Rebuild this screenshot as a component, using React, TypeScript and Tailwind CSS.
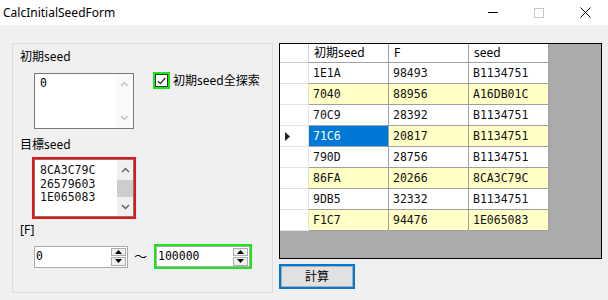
import type React from "react";

const ui = { fontFamily: '"Noto Sans", "Noto Sans CJK JP", sans-serif' };
const mono = { fontFamily: '"DejaVu Sans Mono", "Liberation Mono", monospace' };

const rows = [
  ["1E1A", "98493", "B1134751"],
  ["7040", "88956", "A16DB01C"],
  ["70C9", "28392", "B1134751"],
  ["71C6", "20817", "B1134751"],
  ["790D", "28756", "B1134751"],
  ["86FA", "20266", "8CA3C79C"],
  ["9DB5", "32332", "B1134751"],
  ["F1C7", "94476", "1E065083"],
];

function Chevron({ up, color }: { up?: boolean; color: string }): React.ReactNode {
  return (
    <svg width="9" height="6" viewBox="0 0 9 6">
      <path
        d={up ? "M1 5 L4.5 1.5 L8 5" : "M1 1 L4.5 4.5 L8 1"}
        fill="none"
        stroke={color}
        strokeWidth="1.4"
      />
    </svg>
  );
}

function Spinner(): React.ReactNode {
  return (
    <div className="flex flex-col w-[15px] h-[18px] gap-[1px] mr-[1px]">
      <div className="flex-1 flex items-center justify-center bg-[#f0f0f0] border border-[#adadad]">
        <svg width="7" height="4" viewBox="0 0 7 4">
          <path d="M0 4 L3.5 0 L7 4Z" fill="#000" />
        </svg>
      </div>
      <div className="flex-1 flex items-center justify-center bg-[#f0f0f0] border border-[#adadad]">
        <svg width="7" height="4" viewBox="0 0 7 4">
          <path d="M0 0 L3.5 4 L7 0Z" fill="#000" />
        </svg>
      </div>
    </div>
  );
}

export default function App(): React.ReactNode {
  return (
    <div className="w-[608px] h-[300px] flex flex-col bg-[#f0f0f0] overflow-hidden" style={ui}>
      {/* title bar */}
      <div className="h-[25px] bg-white flex items-center shrink-0">
        <span className="ml-[3px] text-[12px] text-black flex-1">CalcInitialSeedForm</span>
        <div className="flex items-center h-full">
          <div className="w-[46px] h-full flex items-center justify-center">
            <div className="w-[10px] h-px bg-black" />
          </div>
          <div className="w-[46px] h-full flex items-center justify-center">
            <div className="w-[10px] h-[10px] border border-[#c8c8c8]" />
          </div>
          <div className="w-[46px] h-full flex items-center justify-center">
            <svg width="11" height="11" viewBox="0 0 11 11">
              <path d="M0.5 0.5 L10.5 10.5 M10.5 0.5 L0.5 10.5" stroke="#000" strokeWidth="1" />
            </svg>
          </div>
        </div>
      </div>

      <div className="flex items-start">
        {/* group box */}
        <div className="ml-[12px] mt-[18px] w-[261px] h-[250px] border border-[#dcdcdc] pl-[7px] text-[12px] text-black">
          <div className="mt-[5px] leading-[16px]">初期seed</div>
          <div className="flex items-start mt-[8px]">
            <div className="ml-[14px] w-[100px] h-[56px] bg-white border border-[#7a7a7a] flex">
              <div className="flex-1 pl-[5px] pt-[3px] leading-[13.5px] text-[11.5px]" style={mono}>
                0
              </div>
              <div className="w-[17px] flex flex-col items-center justify-between py-[7px] bg-[#fafafa]">
                <Chevron up color="#c4c4c4" />
                <Chevron color="#c4c4c4" />
              </div>
            </div>
            <div className="ml-[19px] -mt-[1px] flex items-center gap-[3px]">
              <div className="w-[17px] h-[17px] border-2 border-[#1de51d] flex">
                <div className="flex-1 bg-white border border-[#333] flex items-center justify-center">
                  <svg width="9" height="8" viewBox="0 0 9 8">
                    <path d="M0.8 4.2 L3.4 6.6 L8.2 1" fill="none" stroke="#333" strokeWidth="1.4" />
                  </svg>
                </div>
              </div>
              <span className="leading-[16px]">初期seed全探索</span>
            </div>
          </div>

          <div className="mt-[8px] leading-[16px]">目標seed</div>
          <div className="mt-[4px] ml-[12px] w-[104px] h-[62px] border-2 border-[#ee1111] flex">
            <div className="flex-1 bg-white border border-[#7a7a7a] flex">
              <div className="flex-1 pl-[5px] pt-[4px] leading-[13.5px] text-[11.5px] text-[#111]" style={mono}>
                <div>8CA3C79C</div>
                <div>26579603</div>
                <div>1E065083</div>
              </div>
              <div className="w-[16px] flex flex-col items-center bg-[#f0f0f0]">
                <div className="h-[20px] flex items-center">
                  <Chevron up color="#606060" />
                </div>
                <div className="w-full h-[17px] bg-[#cdcdcd]" />
                <div className="flex-1 flex items-center">
                  <Chevron color="#606060" />
                </div>
              </div>
            </div>
          </div>

          <div className="mt-[3px] leading-[16px]">[F]</div>
          <div className="flex items-center mt-[6px]">
            <div className="ml-[14px] w-[94px] h-[22px] bg-white border border-[#ababab] flex items-center">
              <span className="flex-1 pl-[1px] text-[11.5px]" style={mono}>0</span>
              <Spinner />
            </div>
            <span className="ml-[6px] w-[18px] text-[13px]">〜</span>
            <div className="ml-[2px] w-[98px] h-[25px] border-2 border-[#1de51d] flex">
              <div className="flex-1 bg-white border border-[#ababab] flex items-center">
                <span className="flex-1 pl-[1px] text-[11.5px]" style={mono}>100000</span>
                <Spinner />
              </div>
            </div>
          </div>
        </div>

        {/* right column */}
        <div className="ml-[6px] mt-[18px] flex flex-col">
          <div className="w-[323px] h-[216px] border border-black bg-[#ababab]">
            <div className="flex">
              <div className="w-[29px] h-[19px] bg-white border-r border-b border-[#d0d0d0]" />
              {["初期seed", "F", "seed"].map((h) => (
                <div
                  key={h}
                  className="w-[80px] h-[19px] bg-white border-r border-b border-[#a0a0a0] pl-[5px] text-[12px] leading-[18px] text-black"
                >
                  {h}
                </div>
              ))}
            </div>
            {rows.map((r, i) => (
              <div key={r[0]} className="flex">
                <div className="w-[29px] h-[21px] bg-white border-r border-b border-[#e3e3e3] flex items-center pl-[5px]">
                  {i === 3 && (
                    <svg width="5" height="9" viewBox="0 0 5 9">
                      <path d="M0 0 L5 4.5 L0 9Z" fill="#222" />
                    </svg>
                  )}
                </div>
                {r.map((c, j) => {
                  const sel = i === 3 && j === 0;
                  const bg = sel ? "bg-[#0078d7] text-white" : i % 2 === 1 ? "bg-[#ffffc6] text-[#111]" : "bg-white text-[#111]";
                  return (
                    <div
                      key={j}
                      className={`w-[80px] h-[21px] border-r border-b border-[#a0a0a0] pl-[4px] text-[11.5px] leading-[20px] ${bg}`}
                      style={mono}
                    >
                      {c}
                    </div>
                  );
                })}
              </div>
            ))}
          </div>
          <div className="mt-[5px] w-[76px] h-[25px] border-2 border-[#0078d7] flex">
            <div className="flex-1 bg-[#e1e1e1] border border-[#adadad] flex items-center justify-center text-[12px] text-black">
              計算
            </div>
          </div>
        </div>
      </div>
    </div>
  );
}
